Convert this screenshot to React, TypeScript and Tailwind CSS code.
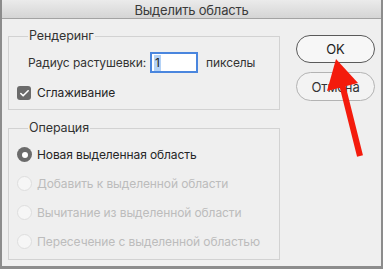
import { Check } from "lucide-react";

const font = { fontFamily: '"Inter", "Noto Sans", sans-serif' };

function Radio({ label, checked, disabled }: { label: string; checked?: boolean; disabled?: boolean }) {
  return (
    <div className="flex h-[29px] items-center gap-[5px] whitespace-nowrap">
      {checked ? (
        <span className="flex h-[15px] w-[15px] items-center justify-center rounded-full bg-[#6b6b6b]">
          <span className="h-[6px] w-[6px] rounded-full bg-white" />
        </span>
      ) : (
        <span className="h-[15px] w-[15px] rounded-full border border-[#dedede] bg-[#f6f6f6]" />
      )}
      <span className={disabled ? "text-[#bcbcbc]" : "text-[#262626]"}>{label}</span>
    </div>
  );
}

export default function App() {
  return (
    <div
      className="relative h-[269px] w-[383px] overflow-hidden border-x-2 border-b-[3px] border-[#8c8c8c] bg-[#efefef] text-[12px] leading-4 tracking-[-0.1px]"
      style={font}
    >
      <div className="flex h-[19px] items-center justify-center border-b border-[#a3a3a3] bg-gradient-to-b from-[#ebebeb] to-[#d5d5d5] pt-[1px] text-[13px] tracking-[-0.2px] text-[#3a3a3a]">
        Выделить область
      </div>

      <div className="flex pt-[9px]">
        <div className="ml-[6px] flex w-[272px] shrink-0 flex-col gap-[10px]">
          <fieldset className="h-[82px] border border-[#d2d2d2] px-[19px]">
            <legend className="px-[1px] text-[12.5px] text-[#333]">Рендеринг</legend>
            <div className="mt-[8px] flex items-center whitespace-nowrap text-[#333]">
              <span>Радиус растушевки:</span>
              <span className="ml-[4px] flex h-[21px] w-[48px] items-center border-2 border-[#4a86de] bg-white px-[2px]">
                <span className="bg-[#b4d2f6] px-[1px] text-[#222]">1</span>
              </span>
              <span className="ml-[8px]">пикселы</span>
            </div>
            <div className="-ml-[11px] mt-[12px] flex items-center gap-[6px] whitespace-nowrap text-[#262626]">
              <span className="flex h-[14px] w-[14px] items-center justify-center rounded-[3px] bg-[#6b6b6b]">
                <Check className="h-[11px] w-[11px] text-white" strokeWidth={3.5} />
              </span>
              <span>Сглаживание</span>
            </div>
          </fieldset>

          <fieldset className="h-[140px] border border-[#d2d2d2] pl-[8px]">
            <legend className="ml-[11px] px-[1px] text-[12.5px] text-[#333]">Операция</legend>
            <div className="mt-[4px] flex flex-col">
              <Radio label="Новая выделенная область" checked />
              <Radio label="Добавить к выделенной области" disabled />
              <Radio label="Вычитание из выделенной области" disabled />
              <Radio label="Пересечение с выделенной областью" disabled />
            </div>
          </fieldset>
        </div>

        <div className="ml-[16px] mt-[7px] flex flex-col gap-[9px]">
          <button className="h-[28px] w-[79px] rounded-full border border-[#5a5a5a] bg-[#f7f7f7] text-[13px] text-[#222]">
            OK
          </button>
          <button className="h-[29px] w-[79px] rounded-full border border-[#b3b3b3] bg-[#f3f3f3] text-[13px] text-[#333]">
            Отмена
          </button>
        </div>
      </div>

      <svg className="absolute left-0 top-0" width="383" height="269" viewBox="0 0 383 269">
        <line x1="358" y1="156" x2="340" y2="84" stroke="#f41b0c" strokeWidth="6" />
        <polygon points="334,59 356,83 325,91" fill="#f41b0c" />
      </svg>
    </div>
  );
}
